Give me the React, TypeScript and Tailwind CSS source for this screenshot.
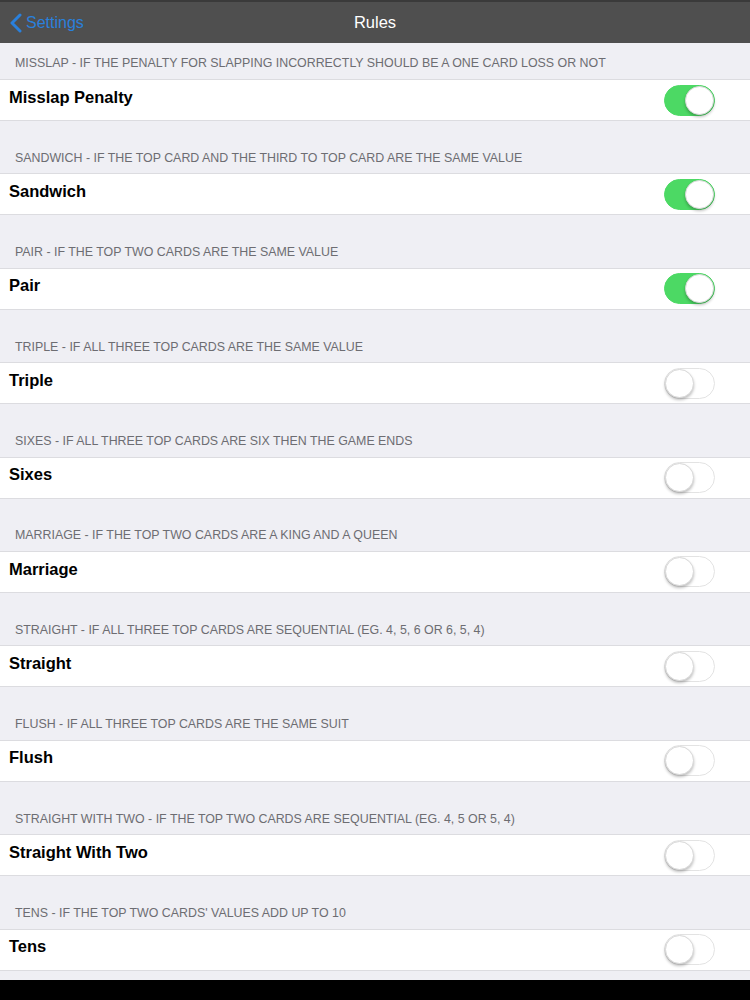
import { useState } from "react";

const RULES = [
  { name: "Misslap Penalty", desc: "Misslap - if the penalty for slapping incorrectly should be a one card loss or not", on: true },
  { name: "Sandwich", desc: "Sandwich - if the top card and the third to top card are the same value", on: true },
  { name: "Pair", desc: "Pair - if the top two cards are the same value", on: true },
  { name: "Triple", desc: "Triple - if all three top cards are the same value", on: false },
  { name: "Sixes", desc: "Sixes - if all three top cards are six then the game ends", on: false },
  { name: "Marriage", desc: "Marriage - if the top two cards are a king and a queen", on: false },
  { name: "Straight", desc: "Straight - if all three top cards are sequential (eg. 4, 5, 6 or 6, 5, 4)", on: false },
  { name: "Flush", desc: "Flush - if all three top cards are the same suit", on: false },
  { name: "Straight With Two", desc: "Straight with two - if the top two cards are sequential (eg. 4, 5 or 5, 4)", on: false },
  { name: "Tens", desc: "Tens - if the top two cards' values add up to 10", on: false },
];

function Toggle({ on, onClick }: { on: boolean; onClick: () => void }) {
  return (
    <button
      onClick={onClick}
      className={`relative w-[51px] h-[31px] rounded-full border ${
        on ? "bg-[#4cd964] border-[#4cd964]" : "bg-white border-[#e3e3e3]"
      }`}
    >
      <span
        className={`absolute top-[0px] w-[29px] h-[29px] rounded-full bg-white shadow-[0_2px_3px_rgba(0,0,0,0.25)] border border-[#d8d8d8] ${
          on ? "left-[20px]" : "left-[0px]"
        }`}
      />
    </button>
  );
}

export default function App() {
  const [state, setState] = useState(RULES.map((r) => r.on));

  return (
    <div className="w-[750px] h-[1000px] flex flex-col bg-[#efeff4] font-['Liberation_Sans',Arial,sans-serif] overflow-hidden">
      <div className="h-[43px] shrink-0 bg-[#4f4f4f] border-t-2 border-[#3a3a3a] flex items-center relative">
        <div className="absolute left-[10px] flex items-center gap-[4px] text-[#2a80dc]">
          <svg width="12" height="20" viewBox="0 0 12 20">
            <path d="M10 2 L2 10 L10 18" fill="none" stroke="#2a80dc" strokeWidth="3" strokeLinecap="round" strokeLinejoin="round" />
          </svg>
          <span className="text-[16px]">Settings</span>
        </div>
        <div className="flex-1 text-center text-white text-[16.5px]">Rules</div>
      </div>

      <div className="flex-1 flex flex-col">
        {RULES.map((r, i) => (
          <div key={r.name} className={i === 0 ? "" : "mt-[16.4px]"}>
            <div className="h-[36px] flex items-end pb-[6px] pl-[15px] text-[12.4px] uppercase text-[#6d6d72]">
              {r.desc}
            </div>
            <div className="h-[42px] bg-white border-y border-[#dcdce0] flex items-center justify-between pl-[9px] pr-[35px]">
              <span className="text-[16.5px] font-bold text-black pb-[6px]">{r.name}</span>
              <Toggle
                on={state[i]}
                onClick={() => setState((s) => s.map((v, j) => (j === i ? !v : v)))}
              />
            </div>
          </div>
        ))}
      </div>

      <div className="h-[20px] shrink-0 bg-black" />
    </div>
  );
}
